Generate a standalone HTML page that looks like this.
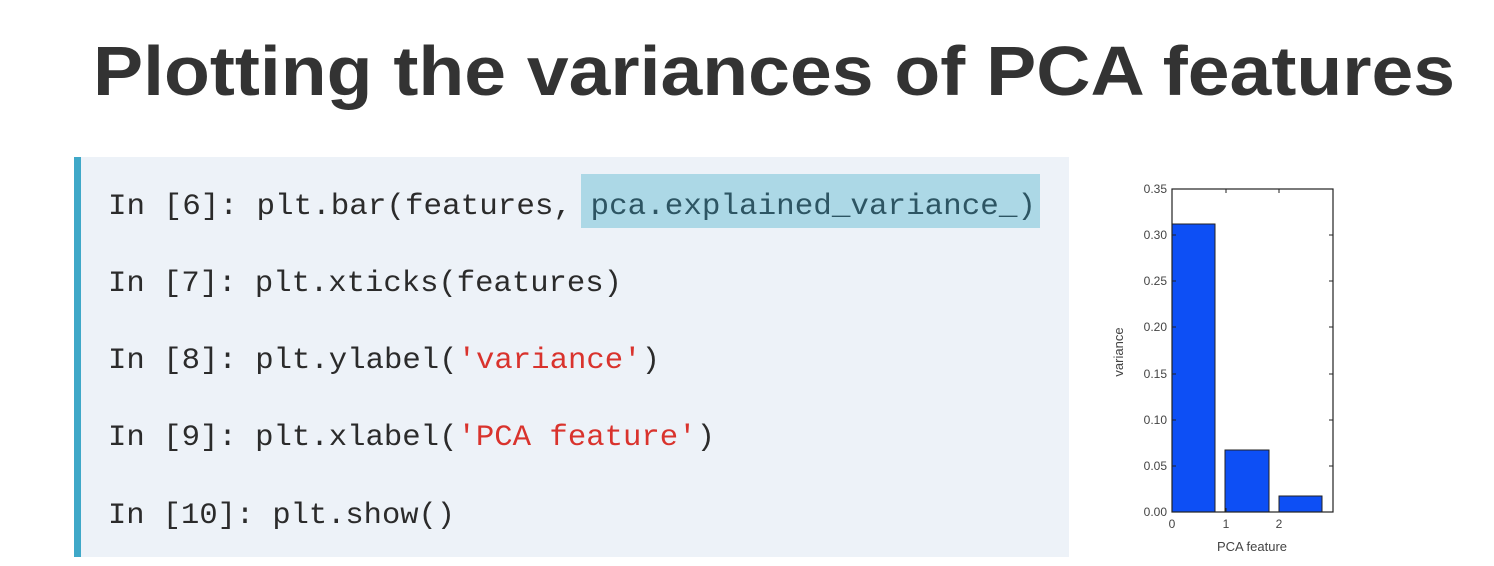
<!DOCTYPE html>
<html><head><meta charset="utf-8"><style>
html,body{margin:0;padding:0;background:#fff;width:1494px;height:566px;overflow:hidden}
</style></head><body>
<svg width="1494" height="566" xmlns="http://www.w3.org/2000/svg">
<text x="93" y="95" font-family="Liberation Sans, sans-serif" font-weight="bold" font-size="70" fill="#333" textLength="1362" lengthAdjust="spacingAndGlyphs">Plotting the variances of PCA features</text>
<rect x="74" y="157" width="995" height="400" fill="#edf2f8"/>
<rect x="74" y="157" width="7" height="400" fill="#3fa8c8"/>
<rect x="581" y="174" width="459" height="54" fill="#acd8e6"/>
<g font-family="Liberation Mono, monospace" font-size="30" fill="#2b2b2b">
<text x="108" y="214" textLength="928" lengthAdjust="spacingAndGlyphs">In [6]: plt.bar(features, <tspan fill="#2d5563">pca.explained_variance_)</tspan></text>
<text x="108" y="291" textLength="514" lengthAdjust="spacingAndGlyphs">In [7]: plt.xticks(features)</text>
<text x="108" y="368" textLength="552" lengthAdjust="spacingAndGlyphs">In [8]: plt.ylabel(<tspan fill="#d9332d">'variance'</tspan>)</text>
<text x="108" y="445" textLength="607" lengthAdjust="spacingAndGlyphs">In [9]: plt.xlabel(<tspan fill="#d9332d">'PCA feature'</tspan>)</text>
<text x="108" y="523" textLength="347" lengthAdjust="spacingAndGlyphs">In [10]: plt.show()</text>
</g>
<g>
<rect x="1172" y="224" width="43" height="288" fill="#0d4ff5" stroke="#222" stroke-width="1"/>
<rect x="1225" y="450" width="44" height="62" fill="#0d4ff5" stroke="#222" stroke-width="1"/>
<rect x="1279" y="496" width="43" height="16" fill="#0d4ff5" stroke="#222" stroke-width="1"/>
<rect x="1172" y="189" width="161" height="323" fill="none" stroke="#222" stroke-width="1.2"/>
<g stroke="#222" stroke-width="1">
<line x1="1226" y1="189" x2="1226" y2="193"/><line x1="1279" y1="189" x2="1279" y2="193"/>
<line x1="1226" y1="512" x2="1226" y2="508"/><line x1="1279" y1="512" x2="1279" y2="508"/>
<line x1="1172" y1="235" x2="1176" y2="235"/><line x1="1329" y1="235" x2="1333" y2="235"/>
<line x1="1172" y1="281" x2="1176" y2="281"/><line x1="1329" y1="281" x2="1333" y2="281"/>
<line x1="1172" y1="327" x2="1176" y2="327"/><line x1="1329" y1="327" x2="1333" y2="327"/>
<line x1="1172" y1="374" x2="1176" y2="374"/><line x1="1329" y1="374" x2="1333" y2="374"/>
<line x1="1172" y1="420" x2="1176" y2="420"/><line x1="1329" y1="420" x2="1333" y2="420"/>
<line x1="1172" y1="466" x2="1176" y2="466"/><line x1="1329" y1="466" x2="1333" y2="466"/>
</g>
<g font-family="Liberation Sans, sans-serif" font-size="12" fill="#444" text-anchor="end">
<text x="1167" y="193">0.35</text><text x="1167" y="239">0.30</text><text x="1167" y="285">0.25</text>
<text x="1167" y="331">0.20</text><text x="1167" y="378">0.15</text><text x="1167" y="424">0.10</text>
<text x="1167" y="470">0.05</text><text x="1167" y="516">0.00</text>
</g>
<g font-family="Liberation Sans, sans-serif" font-size="12" fill="#444" text-anchor="middle">
<text x="1172" y="528">0</text><text x="1226" y="528">1</text><text x="1279" y="528">2</text>
<text x="1252" y="551" font-size="13">PCA feature</text>
<text transform="translate(1123,352) rotate(-90)" font-size="13">variance</text>
</g>
</g>
</svg>
</body></html>
